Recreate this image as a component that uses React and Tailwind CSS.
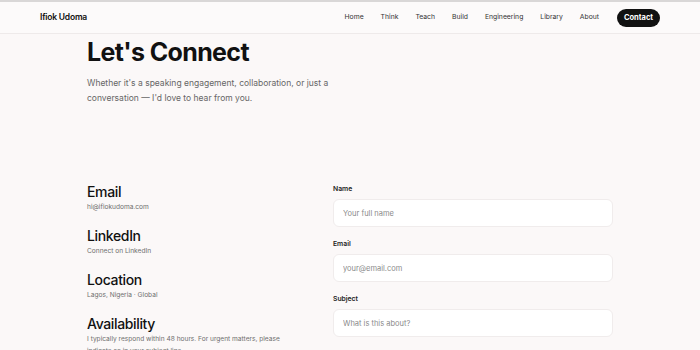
import React from "react";

const navLinks = ["Home", "Think", "Teach", "Build", "Engineering", "Library", "About"];

const contactInfo = [
  { title: "Email", text: "hi@ifiokudoma.com" },
  { title: "LinkedIn", text: "Connect on LinkedIn" },
  { title: "Location", text: "Lagos, Nigeria · Global" },
  {
    title: "Availability",
    text: "I typically respond within 48 hours. For urgent matters, please indicate so in your subject line.",
  },
];

const fields = [
  { label: "Name", placeholder: "Your full name" },
  { label: "Email", placeholder: "your@email.com" },
  { label: "Subject", placeholder: "What is this about?" },
];

export default function App() {
  return (
    <div
      className="h-[350px] overflow-hidden bg-[#fbf8f8] text-[#111] border-t-2 border-[#d9d7d7]"
      style={{ fontFamily: "Inter, 'Noto Sans', sans-serif" }}
    >
      {/* ── Header ── */}
      <header className="h-[32px] flex items-center justify-between pl-10 pr-10 bg-[#fcfafa] border-b border-[#eeeaea]">
        <span className="text-[8.5px] font-semibold tracking-tight">Ifiok Udoma</span>
        <nav className="flex items-center">
          {navLinks.map((l) => (
            <span key={l} className="text-[6.8px] text-[#333] ml-[17px] first:ml-0">
              {l}
            </span>
          ))}
          <span className="ml-[18px] h-[18px] w-[43px] justify-center rounded-full bg-[#111] text-white text-[7.5px] font-bold flex items-center">
            Contact
          </span>
        </nav>
      </header>

      {/* ── Intro ── */}
      <main className="px-[87px]">
        <h1 className="mt-[2px] text-[25px] leading-[32px] font-bold tracking-tight">Let's Connect</h1>
        <p className="mt-[8px] w-[248px] text-[8.5px] leading-[15px] text-[#666]">
          Whether it's a speaking engagement, collaboration, or just a conversation — I'd love to hear from you.
        </p>

        <div className="mt-[78px] flex">
          {/* ── Contact info ── */}
          <div className="w-[246px] pr-[46px] flex flex-col gap-[15px]">
            {contactInfo.map((c) => (
              <div key={c.title}>
                <div className="text-[14px] leading-[16px] font-medium tracking-tight">{c.title}</div>
                <div className="mt-[1px] text-[6.6px] leading-[12px] text-[#6e6e6e]">{c.text}</div>
              </div>
            ))}
          </div>

          {/* ── Form ── */}
          <form className="w-[280px] flex flex-col gap-[12px]">
            {fields.map((f) => (
              <label key={f.label} className="block">
                <span className="block text-[6.8px] leading-[10px] font-semibold text-[#222]">{f.label}</span>
                <input
                  placeholder={f.placeholder}
                  className="mt-[5px] w-full h-[28px] rounded-[6px] bg-white border border-[#f0ecec] px-[9px] text-[7.5px] placeholder:text-[#8a8a8a] outline-none"
                />
              </label>
            ))}
          </form>
        </div>
      </main>
    </div>
  );
}
